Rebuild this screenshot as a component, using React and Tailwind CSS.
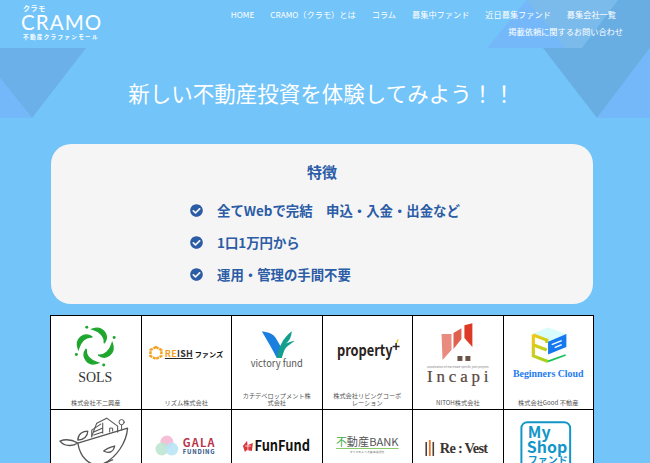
import { FaCheckCircle } from "react-icons/fa";

const jp = '"Noto Sans CJK JP", "Noto Sans", sans-serif';
const serif = '"Liberation Serif", serif';

const navTop = ["HOME", "CRAMO（クラモ）とは", "コラム", "募集中ファンド", "近日募集ファンド", "募集会社一覧"];
const features = ["全てWebで完結　申込・入金・出金など", "1口1万円から", "運用・管理の手間不要"];

function Backdrop() {
  return (
    <svg className="absolute left-0 top-0 h-[120px] w-[650px]" viewBox="0 0 650 120">
      <polygon points="0,48 86,48 32,118 0,78" fill="#6BB0E8" />
      <polygon points="0,78 32,118 0,118" fill="#74B8FA" />
      <polygon points="487,48 527,0 618,0 582,48" fill="#7ABBEC" />
      <polygon points="487,48 527,0 565,48" fill="#74B8FA" />
      <polygon points="582,48 618,0 650,0 650,48" fill="#69AEE3" />
      <polygon points="543,48 650,48 597,118" fill="#69AEE3" />
      <polygon points="597,118 650,48 650,118" fill="#74B8FA" />
    </svg>
  );
}

function Sols() {
  const blade = "M-3,-17 C7,-21 15,-11 9,-3 C10,-10 4,-15 -3,-17 Z";
  return (
    <svg viewBox="0 0 90 78" className="h-[78px] w-full">
      <g transform="translate(44.5,30)" fill="#1FA62E">
        {[0, 90, 180, 270].map((r) => (
          <g key={r} transform={`rotate(${r})`}>
            <path d={blade} stroke="#1FA62E" strokeWidth="1.4" />
            <circle cx="-8.5" cy="-19" r="1.5" />
          </g>
        ))}
      </g>
      <text x="44.5" y="66" textAnchor="middle" fontFamily={serif} fontSize="14" fill="#333">SOLS</text>
    </svg>
  );
}

function Reish() {
  return (
    <svg viewBox="0 0 90 78" className="h-[78px] w-full">
      <polygon points="14,31 19.5,34 19.5,40 14,43 8.5,40 8.5,34" fill="none" stroke="#F2A01E" strokeWidth="2.4" strokeDasharray="3 0.8" />
      <text x="23" y="41" fontFamily={jp} fontWeight="700" fontSize="9" textLength="28" fill="#333">
        <tspan fill="#F2A01E">RE</tspan>ISH
      </text>
      <rect x="23" y="42" width="28" height="1" fill="#222" />
      <text x="53" y="41" fontFamily={jp} fontWeight="700" fontSize="7.2" fill="#111">ファンズ</text>
    </svg>
  );
}

function Victory() {
  return (
    <svg viewBox="0 0 90 78" className="h-[78px] w-full">
      <path d="M30,15 C37,16 42,18 44,22 L51,34 L45,42 C41,33 35,24 30,15 Z" fill="#1B7FE0" />
      <path d="M45,42 C47,32 50,23 60,15 C60,21 57,26 53,28 C58,26 60,25 63,25 C58,29 54,30 52,36 L50,42 Z" fill="#149E8E" />
      <text x="45" y="51" textAnchor="middle" fontFamily={jp} fontSize="9.4" fill="#555">victory fund</text>
    </svg>
  );
}

function PropertyPlus() {
  return (
    <svg viewBox="0 0 90 78" className="h-[78px] w-full">
      <text x="14" y="40" fontFamily={jp} fontWeight="700" fontSize="16" textLength="56" lengthAdjust="spacingAndGlyphs" fill="#2A2320">property</text>
      <path d="M70,30.5 H77 M73.5,27 V34" stroke="#2A2320" strokeWidth="1.5" />
      <path d="M74,27 L75.5,23.5" stroke="#E8C62C" strokeWidth="1.4" />
    </svg>
  );
}

function Incapi() {
  return (
    <svg viewBox="0 0 90 78" className="h-[78px] w-full">
      <polygon points="28.7,18 38.7,18 38.7,34 29.7,44" fill="#E98B7E" />
      <polygon points="40.7,17 48.7,12 48.7,23 40.7,33" fill="#E0604F" />
      <polygon points="51.7,9 59.7,7 59.7,31 51.7,22" fill="#DC3A24" />
      <rect x="44.7" y="40" width="5" height="5" fill="#6B5348" />
      <rect x="52.7" y="40" width="5" height="5" fill="#6B5348" />
      <text x="14" y="52" fontFamily={jp} fontSize="2.6" textLength="62" fill="#777">coordination of real estate specific joint projects</text>
      <text x="14" y="66" fontFamily={serif} fontSize="17" textLength="62" stroke="#5A4A42" strokeWidth="0.25" fill="#5A4A42">Incapi</text>
    </svg>
  );
}

function Beginners() {
  return (
    <svg viewBox="0 0 90 78" className="h-[78px] w-full">
      <defs>
        <linearGradient id="cube-e" x1="0" y1="0" x2="0.6" y2="1">
          <stop offset="0" stopColor="#F4C81C" />
          <stop offset="1" stopColor="#A8D21E" />
        </linearGradient>
      </defs>
      <polygon points="28,18 44.3,11.3 62.7,18 44.3,25.7" fill="#D8FBFB" />
      <path d="M29.5,18.5 V40 L44.3,45.5 M29.5,19 L43,24 V27 M30,29 L43,34" fill="none" stroke="url(#cube-e)" strokeWidth="3.2" />
      <path d="M44.3,25.7 V38.5 L62.7,31 V18 Z" fill="#1478F0" />
      <path d="M48,28.5 L58,24.5 M51,31.5 L58,28.5" fill="none" stroke="#fff" strokeWidth="1.4" />
      <path d="M44.3,45.5 L62,39" stroke="#18C25A" strokeWidth="1.8" />
      <text x="9" y="61" fontFamily={serif} fontWeight="700" fontSize="11" textLength="71" lengthAdjust="spacingAndGlyphs" fill="#1E7CF0">Beginners Cloud</text>
    </svg>
  );
}

function Whale() {
  return (
    <svg viewBox="0 0 90 78" className="h-[78px] w-full">
      <g fill="none" stroke="#555" strokeWidth="1.3" strokeLinejoin="round" strokeLinecap="round">
        <path d="M27,33 L77,18 C76,32 66,48 52,54 C38,58 29,46 27,33 Z" />
        <path d="M27,33 C20,29 14,29 9,31 C13,36 21,37 27,33 Z" />
        <path d="M27,30 C27,24 32,21 37,21 C37,26 33,30 27,30 Z" />
        <path d="M41,26 L46,13 L56,8 L67,16 L67,22" strokeWidth="1.1" />
        <path d="M41,27 V20 L50,14 M43,22 L52,18 M43,25 L52,22 M52,13 V23" strokeWidth="1.1" />
        <path d="M59,22 V18 H62 V21" strokeWidth="1" />
        <circle cx="71" cy="12" r="2.6" strokeWidth="1" />
        <path d="M71,15 V20" strokeWidth="1" />
        <path d="M53,41 C56,38 60,37 64,36 C63,42 58,44 53,41 Z M52,54 C56,53 60,50 62,50" />
      </g>
    </svg>
  );
}

function Gala() {
  return (
    <svg viewBox="0 0 90 78" className="h-[78px] w-full">
      <circle cx="25" cy="32" r="6.5" fill="#F6BFD8" />
      <circle cx="20" cy="39" r="6.5" fill="#BFE5D2" fillOpacity="0.9" />
      <circle cx="30" cy="39" r="6.5" fill="#B8E4F5" fillOpacity="0.9" />
      <text x="41" y="37" fontFamily={jp} fontWeight="700" fontSize="11" textLength="32" fill="#B9344A">GALA</text>
      <text x="41" y="44" fontFamily={jp} fontWeight="700" fontSize="6" textLength="32" fill="#2B4F80">FUNDING</text>
    </svg>
  );
}

function FunFund() {
  return (
    <svg viewBox="0 0 90 78" className="h-[78px] w-full">
      <path d="M11,36 L15,31 L16,35 L21,33 L20,41 L15,40 L13,42 Z" fill="#D9343A" />
      <path d="M13,36 H19 M16,33 V40" stroke="#fff" strokeWidth="0.7" />
      <text x="22.5" y="41" fontFamily={jp} fontWeight="700" fontSize="15" textLength="56" lengthAdjust="spacingAndGlyphs" fill="#111">FunFund</text>
    </svg>
  );
}

function FudosanBank() {
  return (
    <svg viewBox="0 0 90 78" className="h-[78px] w-full">
      <text x="13" y="36" fontFamily={jp} fontSize="11" fill="#3FAE49">不</text>
      <text x="24" y="36" fontFamily={jp} fontSize="11" textLength="52" lengthAdjust="spacingAndGlyphs" fill="#555">動産BANK</text>
      <rect x="13" y="38" width="63" height="1" fill="#8CCB6A" />
      <text x="27" y="43" fontFamily={jp} fontSize="2.8" textLength="35" fill="#666">すべての人へ不動産投資を</text>
    </svg>
  );
}

function ReVest() {
  return (
    <svg viewBox="0 0 90 78" className="h-[78px] w-full">
      <rect x="12.5" y="32" width="1.6" height="14" fill="#4A3E38" />
      <rect x="16" y="30" width="1.8" height="16" fill="#E8742A" />
      <rect x="19.6" y="32" width="1.6" height="14" fill="#4A3E38" />
      <text x="27" y="43" fontFamily={serif} fontWeight="700" fontSize="14.5" textLength="48.5" fill="#3B3330">Re : Vest</text>
    </svg>
  );
}

function MyShop() {
  return (
    <svg viewBox="0 0 90 78" className="h-[78px] w-full overflow-visible">
      <rect x="17.5" y="12" width="49" height="70" rx="6" fill="none" stroke="#1296C9" strokeWidth="2" />
      <g fontFamily={jp} fontWeight="700" fill="#1296C9">
        <text x="24" y="28" fontSize="16">My</text>
        <text x="23" y="43" fontSize="16">Shop</text>
        <text x="24" y="54" fontSize="10">ファンド</text>
      </g>
    </svg>
  );
}

const companies = [
  { logo: <Sols />, name: "株式会社不二興産" },
  { logo: <Reish />, name: "リズム株式会社" },
  { logo: <Victory />, name: "カチデベロップメント株式会社" },
  { logo: <PropertyPlus />, name: "株式会社リビングコーポレーション" },
  { logo: <Incapi />, name: "NITOH株式会社" },
  { logo: <Beginners />, name: "株式会社Good 不動産" },
  { logo: <Whale /> },
  { logo: <Gala /> },
  { logo: <FunFund /> },
  { logo: <FudosanBank /> },
  { logo: <ReVest /> },
  { logo: <MyShop /> },
];

export default function App() {
  return (
    <div className="relative h-[463px] w-[650px] overflow-hidden bg-[#72C4F9]" style={{ fontFamily: jp }}>
      <Backdrop />

      <header className="relative flex h-[48px] justify-between pl-[21px]">
        <div className="flex w-[84px] flex-col pt-[4px] text-white">
          <span className="pl-[2px] text-[7px] font-bold leading-[8px] tracking-[0.6px]">クラモ</span>
          <span className="text-[20.5px] font-normal leading-[21px] tracking-[1.1px]" style={{ fontFamily: "Lato, sans-serif" }}>CRAMO</span>
          <span className="whitespace-nowrap pl-[2px] text-[5.6px] font-bold leading-[9px] tracking-[1.3px]">不動産クラファンモール</span>
        </div>
        <nav className="flex flex-col items-end pt-[6px] text-[8.2px] leading-[17px] text-white">
          <ul className="flex gap-[16px] pr-[34px]">
            {navTop.map((item) => (
              <li key={item} className="whitespace-nowrap">{item}</li>
            ))}
          </ul>
          <div className="pr-[27px]">掲載依頼に関するお問い合わせ</div>
        </nav>
      </header>

      <h1 className="relative mt-[29px] pr-[7px] text-center text-[21.5px] font-normal leading-[32px] text-white">
        新しい不動産投資を体験してみよう！！
      </h1>

      <section className="relative ml-[51px] mt-[35px] h-[160px] w-[542px] rounded-[20px] bg-[#F5F5F5] pt-[16px] text-[#2B5CA6]">
        <h2 className="text-center text-[15px] font-bold leading-[24px]">特徴</h2>
        <ul className="mt-[14px] flex flex-col gap-[8px] pl-[139px]">
          {features.map((f) => (
            <li key={f} className="flex h-[24px] items-center gap-[14px] text-[13.4px] font-bold">
              <FaCheckCircle className="h-[13px] w-[13px] shrink-0" />
              <span>{f}</span>
            </li>
          ))}
        </ul>
      </section>

      <div className="relative ml-[50px] mt-[11px] grid w-[544px] grid-cols-6 border-l border-t border-black bg-white">
        {companies.map((c, i) => (
          <div key={i} className="flex h-[94px] flex-col border-b border-r border-black">
            {c.logo}
            {c.name && (
              <p className="flex h-[15px] items-end justify-center px-[8px] pb-[3px] text-center text-[6.2px] leading-[6.5px] text-[#555]">
                <span>{c.name}</span>
              </p>
            )}
          </div>
        ))}
      </div>
    </div>
  );
}
